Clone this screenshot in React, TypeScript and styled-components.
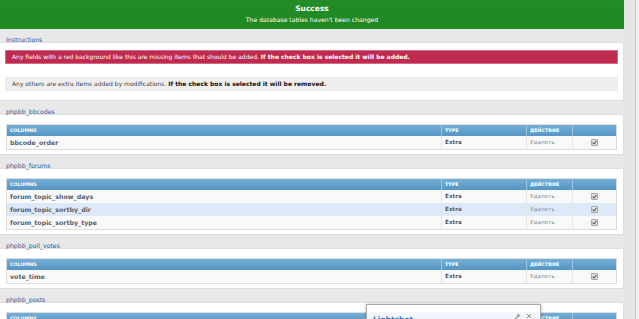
import React from "react";
import styled, { createGlobalStyle } from "styled-components";

const GlobalStyle = createGlobalStyle`
  html, body {
    margin: 0;
    padding: 0;
    background: #e8e8e9;
    font-family: "DejaVu Sans", Verdana, sans-serif;
  }
`;

type Row = { name: string; type: string; hl?: boolean };
type Table = { title: string; rows: Row[] };

const tables: Table[] = [
  { title: "phpbb_bbcodes", rows: [{ name: "bbcode_order", type: "Extra" }] },
  {
    title: "phpbb_forums",
    rows: [
      { name: "forum_topic_show_days", type: "Extra" },
      { name: "forum_topic_sortby_dir", type: "Extra", hl: true },
      { name: "forum_topic_sortby_type", type: "Extra" },
    ],
  },
  { title: "phpbb_poll_votes", rows: [{ name: "vote_time", type: "Extra" }] },
  {
    title: "phpbb_posts",
    rows: [
      { name: "post_edit_user", type: "Extra" },
      { name: "post_edit_count", type: "Extra" },
    ],
  },
];

const App = () => {
  return (
    <>
      <GlobalStyle />
      <Page>
        <Main>
          <Banner>
            <BannerTitle>Success</BannerTitle>
            <BannerText>The database tables haven't been changed</BannerText>
          </Banner>

          <Legend>Instructions</Legend>
          <Panel>
            <Notice $variant="red">
              Any fields with a red background like this are missing items that should be added.{" "}
              <b>If the check box is selected it will be added.</b>
            </Notice>
            <Notice $variant="gray">
              Any others are extra items added by modifications.{" "}
              <b>If the check box is selected it will be removed.</b>
            </Notice>
          </Panel>

          {tables.map((t) => (
            <React.Fragment key={t.title}>
              <Legend>{t.title}</Legend>
              <Panel $table>
                <Grid>
                  <HeadCell>Columns</HeadCell>
                  <HeadCell>Type</HeadCell>
                  <HeadCell>Действие</HeadCell>
                  <HeadCell />
                  {t.rows.map((r) => (
                    <React.Fragment key={r.name}>
                      <Cell $hl={r.hl} $bold>{r.name}</Cell>
                      <Cell $hl={r.hl} $type>{r.type}</Cell>
                      <Cell $hl={r.hl} $muted>Удалить</Cell>
                      <Cell $hl={r.hl} $center>
                        <Check>
                          <svg width="5" height="5" viewBox="0 0 10 10">
                            <path d="M1.5 5.2 L4 7.8 L8.8 1.8" fill="none" stroke="#333" strokeWidth="2" />
                          </svg>
                        </Check>
                      </Cell>
                    </React.Fragment>
                  ))}
                </Grid>
              </Panel>
            </React.Fragment>
          ))}

          <Popup>
            <PopupBar>
              <PopupTitle>Lightshot</PopupTitle>
              <PopupTools>
                <svg width="7" height="7" viewBox="0 0 16 16">
                  <path
                    d="M14 3.5 L11.5 6 L10 6 L10 4.5 L12.5 2 A4 4 0 0 0 7.2 6.8 L1.5 12.5 L3.5 14.5 L9.2 8.8 A4 4 0 0 0 14 3.5 Z"
                    fill="#8a8a8a"
                  />
                </svg>
                <svg width="6" height="6" viewBox="0 0 10 10">
                  <path d="M1.5 1.5 L8.5 8.5 M8.5 1.5 L1.5 8.5" stroke="#8a8a8a" strokeWidth="1.6" />
                </svg>
              </PopupTools>
            </PopupBar>
          </Popup>
        </Main>
        <Gutter />
        <Edge />
      </Page>
    </>
  );
};

const Page = styled.div`
  display: flex;
  height: 319px;
  overflow: hidden;
`;

const Main = styled.div`
  position: relative;
  width: 624px;
  flex: none;
  background: #e8e8e9;
`;

const Gutter = styled.div`
  width: 11px;
  flex: none;
  background: #e6e6e7;
`;

const Edge = styled.div`
  flex: 1;
  border-left: 1px solid #c8c8c8;
  background: #f2f2f2;
`;

const Banner = styled.div`
  height: 29px;
  box-sizing: border-box;
  background: linear-gradient(#238b27, #208823);
  color: #fff;
  text-align: center;
  padding-top: 4px;
`;

const BannerTitle = styled.div`
  font-weight: bold;
  font-size: 7.5px;
  line-height: 10px;
`;

const BannerText = styled.div`
  font-size: 6.1px;
  line-height: 10px;
  margin-top: 1px;
`;

const Legend = styled.div`
  position: relative;
  z-index: 1;
  margin: 7px 0 -2px 6px;
  font-size: 6.2px;
  line-height: 8px;
  color: #1f5c9c;
`;

const Panel = styled.div<{ $table?: boolean }>`
  background: #fff;
  border: 1px solid #dedede;
  border-left: none;
  padding: ${(p) => (p.$table ? "9px 6px 4px 6px" : "7px 5px 9px 5px")};
`;

const Notice = styled.div<{ $variant: "red" | "gray" }>`
  box-sizing: border-box;
  height: 14px;
  padding-left: 6px;
  font-size: 6px;
  line-height: 12px;
  white-space: nowrap;
  border: 1px solid ${(p) => (p.$variant === "red" ? "#d66a84" : "#ececec")};
  background: ${(p) => (p.$variant === "red" ? "#bf2b50" : "#efefef")};
  color: ${(p) => (p.$variant === "red" ? "#fff" : "#444")};
  & + & {
    margin-top: 13px;
  }
  b {
    color: ${(p) => (p.$variant === "red" ? "#fff" : "#111")};
  }
`;

const Grid = styled.div`
  display: grid;
  grid-template-columns: 434px 85px 46px 1fr;
  border: 1px solid #dcdcdc;
`;

const HeadCell = styled.div`
  height: 11px;
  line-height: 11px;
  padding-left: 3px;
  background: linear-gradient(#74afd7, #5595c4);
  color: #fff;
  font-weight: bold;
  font-size: 4.8px;
  text-transform: uppercase;
  border-left: 1px solid #9cc6e3;
  &:first-child {
    border-left: none;
  }
`;

const Cell = styled.div<{
  $hl?: boolean;
  $bold?: boolean;
  $type?: boolean;
  $muted?: boolean;
  $center?: boolean;
}>`
  height: 13px;
  line-height: 13px;
  padding-left: ${(p) => (p.$center ? "0" : "3px")};
  display: ${(p) => (p.$center ? "flex" : "block")};
  align-items: center;
  justify-content: center;
  background: ${(p) => (p.$hl ? "#dde9f8" : "#f9f9f9")};
  border-left: 1px solid #e6e6e6;
  font-size: ${(p) => (p.$bold ? "6.3px" : "5.7px")};
  font-weight: ${(p) => (p.$bold || p.$type ? "bold" : "normal")};
  color: ${(p) => (p.$muted ? "#8c8c8c" : p.$type ? "#555c68" : "#5a5e68")};
  white-space: nowrap;
  &:nth-child(4n + 1) {
    border-left: none;
  }
`;

const Check = styled.span`
  box-sizing: border-box;
  width: 7px;
  height: 7px;
  border: 1px solid #a8a8a8;
  border-radius: 1px;
  background: linear-gradient(#e4e4e4, #cfcfcf);
  display: flex;
  align-items: center;
  justify-content: center;
`;

const Popup = styled.div`
  position: absolute;
  left: 366px;
  top: 304px;
  width: 173px;
  height: 60px;
  background: #fff;
  border: 1px solid #a9a9a9;
  box-shadow: 0 0 3px rgba(0, 0, 0, 0.25);
  z-index: 5;
`;

const PopupBar = styled.div`
  display: flex;
  align-items: center;
  justify-content: space-between;
  margin-top: 7px;
  padding: 0 8px 0 6px;
  height: 14px;
  background: linear-gradient(#f4f8fc, #e6eff8);
`;

const PopupTitle = styled.span`
  font-size: 7.5px;
  color: #3c74b4;
  font-weight: bold;
`;

const PopupTools = styled.span`
  display: flex;
  gap: 5px;
  align-items: center;
  margin-top: -6px;
`;

export default App;
